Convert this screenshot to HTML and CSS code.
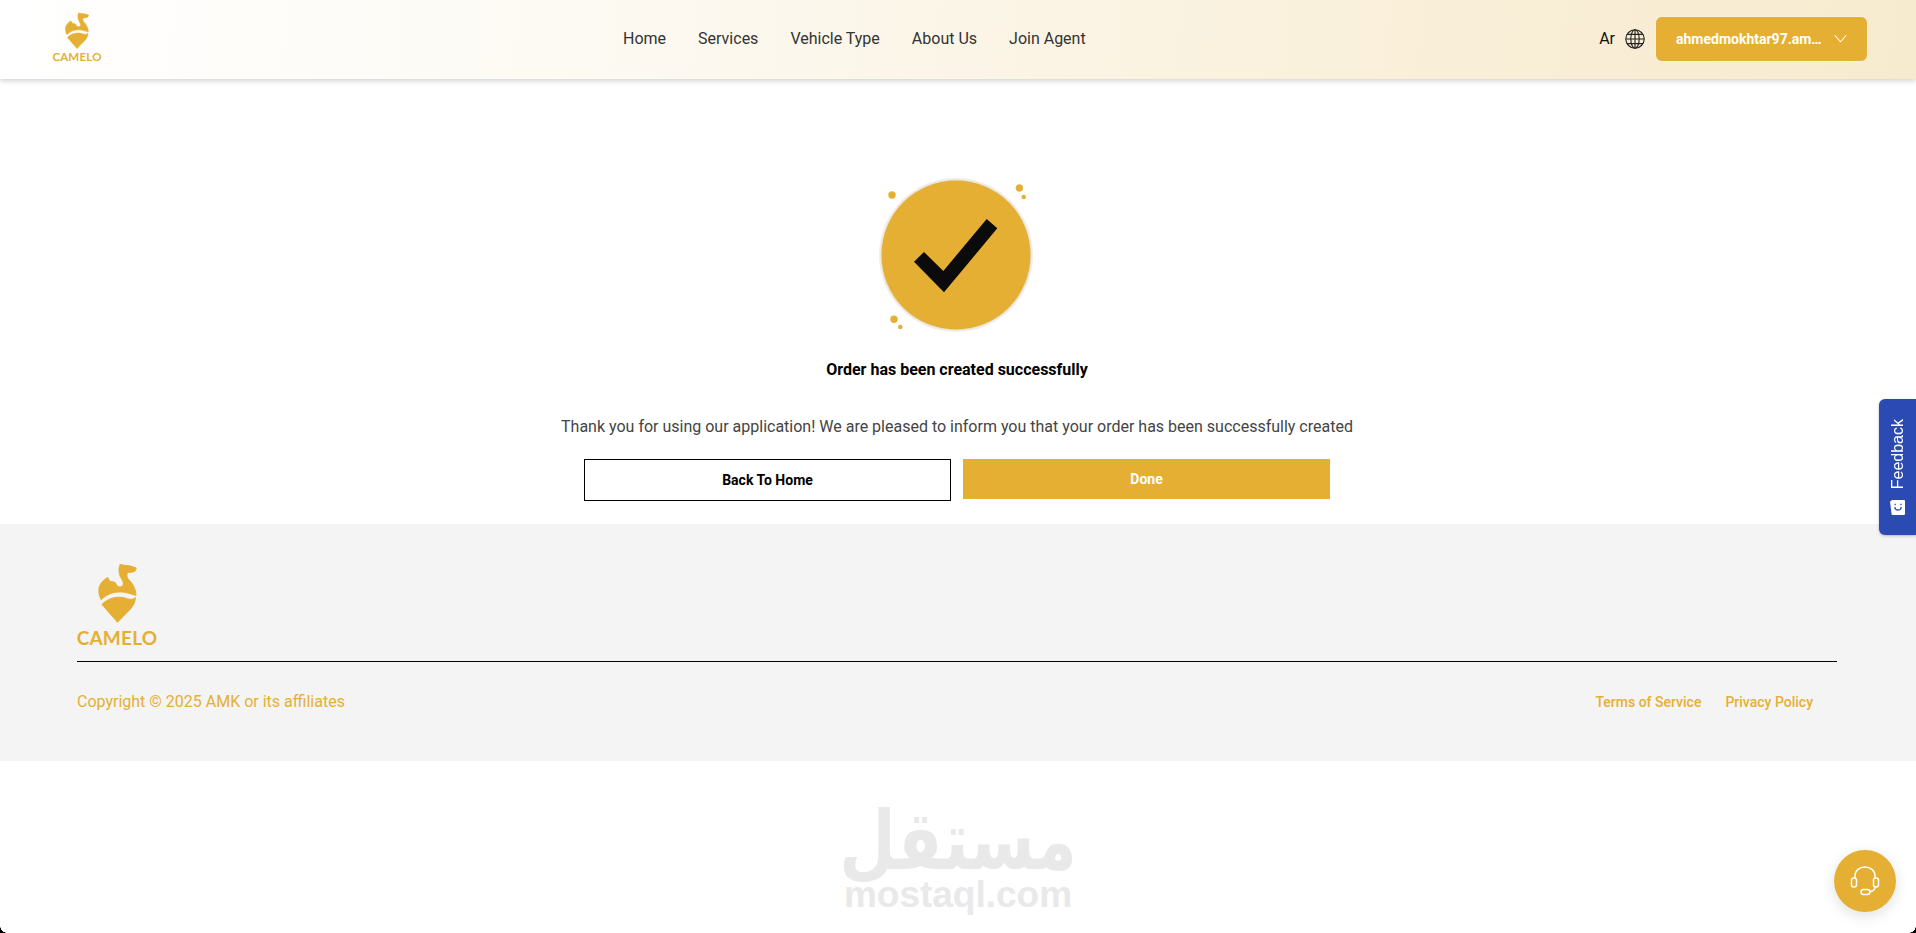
FILE: index.html
```html
<!DOCTYPE html>
<html lang="en">
<head>
    <meta charset="UTF-8">
    <meta name="viewport" content="width=device-width, initial-scale=1.0">
    <title>Camelo</title>
    <link rel="stylesheet" href="styles.css">
</head>
<body>
    <svg class="sprite" width="0" height="0">
        <symbol id="camel" viewBox="140 40 120 182">
            <path d="M208 43 L222 46 L240 48 L258 54 L254 64 L243 67 L233 68 C227 72 228 82 235 90 C247 102 256 118 257 138 C248 137 236 131 222 129 C198 125 170 130 150 152 C143 140 141 126 144 112 C148 100 157 90 170 83 L176 95 L192 98 C196 102 197 110 203 112 C212 114 218 110 218 102 C218 92 208 84 206 72 C204 62 204 52 208 43 Z"/>
            <path d="M152 166 C170 148 196 140 222 146 C234 149 246 155 255 145 C255 158 249 170 240 180 L200 221 Z"/>
        </symbol>
    </svg>

    <header class="topbar">
        <a class="logo logo-small" href="#">
            <svg class="logo-icon"><use href="#camel"/></svg>
            <span class="logo-text">CAMELO</span>
        </a>
        <nav class="nav">
            <a href="#">Home</a>
            <a href="#">Services</a>
            <a href="#">Vehicle Type</a>
            <a href="#">About Us</a>
            <a href="#">Join Agent</a>
        </nav>
        <div class="user-area">
            <span class="lang">Ar</span>
            <svg class="globe" viewBox="0 0 20 20" fill="none" stroke="#222" stroke-width="1.1">
                <circle cx="10" cy="10" r="9.2"/>
                <ellipse cx="10" cy="10" rx="4.2" ry="9.2"/>
                <path d="M10 .8v18.4M.8 10h18.4M2.2 5.4h15.6M2.2 14.6h15.6"/>
            </svg>
            <button class="user-btn">
                <span class="user-name">ahmedmokhtar97.am…</span>
                <svg class="chevron" viewBox="0 0 12 8" fill="none" stroke="#fff" stroke-width="1"><path d="M.7 1l5.3 6 5.3-6"/></svg>
            </button>
        </div>
    </header>

    <main class="success">
        <svg class="success-icon" viewBox="0 0 220 180">
            <circle cx="106" cy="94" r="77" fill="#f1eee8"/>
            <circle cx="106" cy="94" r="75.500" fill="#e8e2d6"/>
            <circle cx="106" cy="94" r="74.500" fill="#e5af33"/>
            <path d="M64 100.700L74 91L93.300 110L136.700 58L147.300 67.300L94 131.300Z" fill="#0b0b0b"/>
            <g fill="#e5af33">
                <circle cx="42" cy="34" r="3.700"/>
                <circle cx="169.300" cy="27" r="3.700"/>
                <circle cx="173.700" cy="36" r="2.300"/>
                <circle cx="44" cy="158.300" r="3.700"/>
                <circle cx="50.300" cy="166" r="2.300"/>
            </g>
        </svg>
        <h1 class="success-title">Order has been created successfully</h1>
        <p class="success-text">Thank you for using our application! We are pleased to inform you that your order has been successfully created</p>
        <div class="success-actions">
            <button class="btn btn-outline">Back To Home</button>
            <button class="btn btn-fill">Done</button>
        </div>
    </main>

    <footer class="footer">
        <a class="logo logo-large" href="#">
            <svg class="logo-icon"><use href="#camel"/></svg>
            <span class="logo-text">CAMELO</span>
        </a>
        <div class="footer-bottom">
            <span class="copyright">Copyright © 2025 AMK or its affiliates</span>
            <div class="footer-links">
                <a href="#">Terms of Service</a>
                <a href="#">Privacy Policy</a>
            </div>
        </div>
    </footer>

    <!-- Watermark -->
    <div class="watermark">
        <span class="watermark-ar" lang="ar" dir="rtl">مستقل</span>
        <span class="watermark-en">mostaql.com</span>
    </div>

    <!-- Floating widgets -->
    <a class="feedback" href="#">
        <span class="feedback-label">Feedback</span>
        <svg class="feedback-icon" viewBox="0 0 14 14">
            <path d="M0 1.500L2 0H13a1 1 0 0 1 1 1V13a1 1 0 0 1-1 1H2.500a1 1 0 0 1-1-1Z" fill="#fff"/>
            <path d="M4.500 6.500C5 10.500 10 10.500 10.500 6.500" fill="none" stroke="#2b4ab3" stroke-width="1.200"/>
            <path d="M4.800 3.500v1.300M10.200 3.500v1.300" stroke="#2b4ab3" stroke-width="1.200"/>
        </svg>
    </a>
    <a class="support" href="#">
        <svg viewBox="0 0 32 32" fill="none" stroke="#fff" stroke-width="1.500">
            <path d="M6 13V11C6 5.500 10.500 2 16 2s10 3.500 10 9v2"/>
            <rect x="2.500" y="13" width="5" height="9" rx="2.200"/>
            <rect x="24.500" y="13" width="5" height="9" rx="2.200"/>
            <path d="M26 22c0 3-3 4.500-6 4.800"/>
            <rect x="12" y="24.500" width="9" height="5" rx="2.500"/>
        </svg>
    </a>
</body>
</html>
```

FILE: styles.css
```css
/* Global Styles */
* {
    margin: 0;
    padding: 0;
    box-sizing: border-box;
}

html, body {
    height: 933px;
    overflow: hidden;
}

body {
    font-family: 'Roboto', 'Liberation Sans', sans-serif;
    background-color: #fff;
    color: #333;
}

/* Rounded window corners at the bottom */
body::before,
body::after {
    content: "";
    position: fixed;
    bottom: 0;
    width: 7px;
    height: 7px;
    z-index: 5;
}

body::before {
    left: 0;
    background: radial-gradient(circle at 100% 0, transparent 6.5px, #000 7px);
}

body::after {
    right: 0;
    background: radial-gradient(circle at 0 0, transparent 6.5px, #000 7px);
}

a {
    text-decoration: none;
    color: inherit;
}

button {
    font-family: inherit;
    cursor: pointer;
}

.sprite {
    display: block;
    height: 0;
}

/* Logo */
.logo {
    display: flex;
    flex-direction: column;
    align-items: center;
    color: #e5af33;
}

.logo svg {
    fill: #e5af33;
    stroke: #e5af33;
    stroke-width: 3px;
    stroke-linejoin: round;
}

.logo-text {
    font-family: 'Lato', 'Open Sans', sans-serif;
    font-weight: 700;
    letter-spacing: 0.2px;
}

.logo-small {
    width: 48px;
    margin-top: -1px;
}

.logo-small .logo-icon {
    width: 24px;
    height: 37px;
}

.logo-small .logo-text {
    font-size: 11.5px;
    line-height: 14px;
    margin-top: 1px;
}

.logo-large {
    width: 80px;
}

.logo-large .logo-icon {
    width: 39px;
    height: 60px;
}

.logo-large .logo-text {
    font-size: 19px;
    line-height: 22px;
    margin-top: 4px;
}

/* Header */
.topbar {
    height: 79px;
    display: grid;
    grid-template-columns: 570px 1fr auto;
    align-items: center;
    padding: 0 48px 2px 53px;
    background: linear-gradient(95deg, #fff 0%, #fdfaf3 30%, #f9eed6 80%, #f7ebcf 100%);
    box-shadow: 0 2px 5px rgba(0, 0, 0, 0.18);
    position: relative;
}

.nav {
    display: flex;
    gap: 32px;
    font-size: 16px;
    color: #333;
}

.user-area {
    display: flex;
    align-items: center;
}

.lang {
    font-size: 16px;
    color: #111;
    margin-right: 10px;
}

.globe {
    width: 20px;
    height: 20px;
    margin-right: 10px;
}

.user-btn {
    width: 213px;
    height: 46px;
    display: flex;
    align-items: center;
    justify-content: space-between;
    padding: 0 20px;
    background-color: #e5af33;
    border: 1px solid #fbf3df;
    border-radius: 7px;
    color: #fff;
    font-size: 14px;
    font-weight: 700;
}

.chevron {
    width: 13px;
    height: 9px;
}

/* Success Section */
.success {
    height: 445px;
    display: flex;
    flex-direction: column;
    align-items: center;
    padding: 82px 2px 0 0;
}

.success-icon {
    width: 220px;
    height: 180px;
    flex-shrink: 0;
    margin-left: 6px;
}

.success-title {
    font-size: 16px;
    line-height: 20px;
    font-weight: 700;
    color: #000;
    margin-top: 19px;
}

.success-text {
    font-size: 16px;
    line-height: 20px;
    color: #444;
    margin-top: 37px;
}

.success-actions {
    display: flex;
    align-items: flex-start;
    gap: 12px;
    margin-top: 22px;
}

.btn {
    width: 367px;
    font-size: 14px;
    font-weight: 700;
}

.btn-outline {
    height: 42px;
    background-color: #fff;
    border: 1px solid #000;
    color: #000;
}

.btn-fill {
    height: 40px;
    background-color: #e5af33;
    border: none;
    color: #fff;
}

/* Footer */
.footer {
    height: 237px;
    background-color: #f4f4f4;
    padding: 39px 79px 0 77px;
}

.footer-bottom {
    display: flex;
    justify-content: space-between;
    align-items: center;
    height: 80px;
    margin-top: 12px;
    padding-right: 24px;
    border-top: 1px solid #000;
    color: #e5af33;
}

.copyright {
    font-size: 16px;
}

.footer-links {
    display: flex;
    gap: 24px;
    font-size: 14px;
    font-weight: 500;
}

/* Watermark */
.watermark {
    height: 172px;
    display: flex;
    flex-direction: column;
    align-items: center;
    color: #e9e9e9;
    padding-top: 46px;
}

.watermark-ar {
    font-family: 'DejaVu Sans', sans-serif;
    font-weight: 700;
    font-size: 65px;
    line-height: 68px;
    transform: scaleY(1.25);
}

.watermark-en {
    font-family: 'Liberation Sans', sans-serif;
    font-weight: 700;
    font-size: 37px;
    line-height: 40px;
}

/* Floating widgets */
.feedback {
    position: fixed;
    right: 0;
    top: 399px;
    width: 37px;
    height: 136px;
    display: flex;
    flex-direction: column;
    align-items: center;
    padding: 20px 0 0 0;
    background-color: #2b4ab3;
    border-radius: 6px 0 0 6px;
    box-shadow: 0 1px 3px rgba(0, 0, 0, 0.25);
    color: #fff;
}

.feedback-label {
    writing-mode: vertical-rl;
    transform: rotate(180deg);
    font-family: 'Liberation Sans', sans-serif;
    font-size: 16px;
    line-height: 18px;
}

.feedback-icon {
    width: 15px;
    height: 15px;
    margin-top: 11px;
}

.support {
    position: fixed;
    left: 1834px;
    top: 850px;
    width: 62px;
    height: 62px;
    display: flex;
    align-items: center;
    justify-content: center;
    background-color: #e5af33;
    border-radius: 50%;
    box-shadow: 0 4px 14px rgba(0, 0, 0, 0.12);
}

.support svg {
    width: 32px;
    height: 32px;
}
```
